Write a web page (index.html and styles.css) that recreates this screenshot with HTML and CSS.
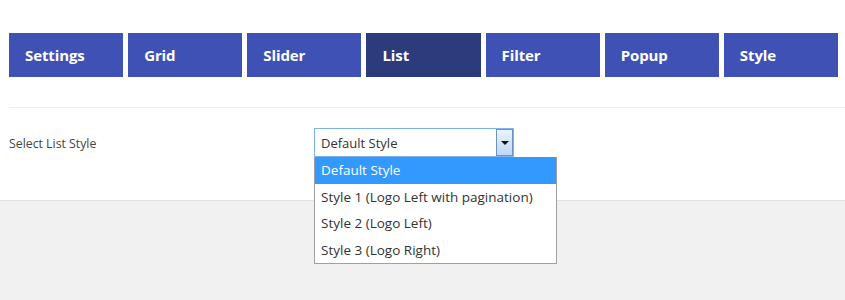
FILE: index.html
```html
<!DOCTYPE html>
<html lang="en">
<head>
  <meta charset="UTF-8">
  <title>List Settings</title>
  <link rel="stylesheet" href="styles.css">
</head>
<body>
  <div class="panel">
    <nav class="tabs">
      <a class="tab">Settings</a>
      <a class="tab">Grid</a>
      <a class="tab">Slider</a>
      <a class="tab active">List</a>
      <a class="tab">Filter</a>
      <a class="tab">Popup</a>
      <a class="tab">Style</a>
    </nav>
    <div class="divider"></div>

    <div class="field">
      <label class="field-label">Select List Style</label>
      <div class="select">
        <div class="select-box">
          <span class="select-value">Default Style</span>
          <span class="select-arrow"><span class="caret"></span></span>
        </div>
        <ul class="select-menu">
          <li class="selected">Default Style</li>
          <li>Style 1 (Logo Left with pagination)</li>
          <li>Style 2 (Logo Left)</li>
          <li>Style 3 (Logo Right)</li>
        </ul>
      </div>
    </div>
  </div>
  <div class="footer-space"></div>
</body>
</html>
```

FILE: styles.css
```css
body {
  margin: 0;
  background-color: #f1f1f1;
  font-family: "Open Sans", "Liberation Sans", sans-serif;
  color: #444;
}
.panel {
  position: relative;
  z-index: 1;
  background-color: #fff;
  height: 200px;
  padding-left: 9px;
  box-sizing: border-box;
  box-shadow: 0 1px 1px rgba(0, 0, 0, 0.06);
}
.footer-space {
  height: 100px;
}
.tabs {
  display: flex;
  gap: 5px;
  width: 829px;
  padding-top: 33px;
}
.tab {
  flex: 1;
  height: 44px;
  box-sizing: border-box;
  padding-left: 16px;
  background-color: #3f51b5;
  color: #fff;
  font-weight: bold;
  font-size: 15px;
  line-height: 45px;
  letter-spacing: -0.1px;
}
.tab.active {
  background-color: #2d3a7c;
}
.divider {
  margin-top: 30px;
  border-top: 1px solid #eee;
}
.field {
  display: flex;
  padding-top: 20px;
}
.field-label {
  width: 305px;
  font-size: 12.3px;
  line-height: 31px;
  color: #444;
}
.select {
  position: relative;
}
.select-box {
  display: flex;
  width: 200px;
  height: 29px;
  box-sizing: border-box;
  border: 1px solid #7eb4ea;
  background-color: #fff;
  align-items: center;
  justify-content: space-between;
}
.select-value {
  padding-left: 6px;
  font-size: 13px;
  color: #333;
}
.select-arrow {
  display: flex;
  align-items: center;
  justify-content: center;
  width: 17px;
  height: 27px;
  box-sizing: border-box;
  border: 1px solid #6e93c0;
  background: linear-gradient(#eaf3fc, #bcd9f4);
}
.caret {
  width: 0;
  height: 0;
  border-left: 4px solid transparent;
  border-right: 4px solid transparent;
  border-top: 4px solid #111;
}
.select-menu {
  position: absolute;
  z-index: 10;
  top: 29px;
  left: 0;
  width: 243px;
  margin: 0;
  padding: 0;
  list-style: none;
  box-sizing: border-box;
  border: 1px solid #a0a0a0;
  border-top: none;
  background-color: #fff;
}
.select-menu li {
  height: 26.5px;
  line-height: 27px;
  padding-left: 6px;
  font-size: 13.5px;
  color: #333;
}
.select-menu li.selected {
  background-color: #3399ff;
  color: #fff;
}
```
